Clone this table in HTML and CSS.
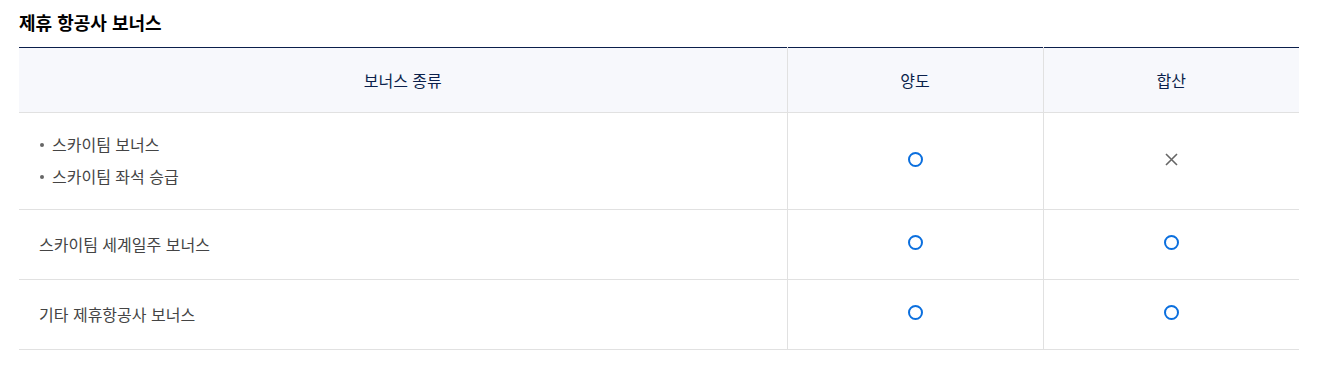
FILE: index.html
```html
<!DOCTYPE html>
<html lang="ko">
<head>
<meta charset="utf-8">
<link rel="stylesheet" href="styles.css">
</head>
<body>
<section class="bonus">
  <h3 class="bonus-title">제휴 항공사 보너스</h3>
  <table class="bonus-table">
    <colgroup>
      <col class="col-kind">
      <col class="col-mark">
      <col class="col-mark">
    </colgroup>
    <thead>
      <tr>
        <th>보너스 종류</th>
        <th>양도</th>
        <th>합산</th>
      </tr>
    </thead>
    <tbody>
      <tr class="row-tall">
        <td class="kind">
          <ul class="dot-list">
            <li>스카이팀 보너스</li>
            <li>스카이팀 좌석 승급</li>
          </ul>
        </td>
        <td class="mark"><span class="icon-o"></span></td>
        <td class="mark"><svg class="icon-x" width="13" height="13" viewBox="0 0 13 13"><path d="M1 1 L12 12 M12 1 L1 12" stroke="#666" stroke-width="1.6" fill="none"/></svg></td>
      </tr>
      <tr>
        <td class="kind">스카이팀 세계일주 보너스</td>
        <td class="mark"><span class="icon-o"></span></td>
        <td class="mark"><span class="icon-o"></span></td>
      </tr>
      <tr>
        <td class="kind">기타 제휴항공사 보너스</td>
        <td class="mark"><span class="icon-o"></span></td>
        <td class="mark"><span class="icon-o"></span></td>
      </tr>
    </tbody>
  </table>
</section>
</body>
</html>
```
FILE: styles.css
```css
* { box-sizing: border-box; }
html, body { margin: 0; padding: 0; background: #fff; }
body {
  font-family: "Noto Sans CJK KR", "Noto Sans", sans-serif;
  color: #444;
}
.bonus { padding: 10px 22px 0 19px; }
.bonus-title {
  margin: 0;
  height: 37px;
  font-size: 18px;
  line-height: 24px;
  font-weight: 700;
  color: #000;
}
.bonus-table {
  width: 100%;
  border-collapse: collapse;
  table-layout: fixed;
  border-top: 1px solid #0b1f4b;
}
.col-kind { width: 60%; }
.col-mark { width: 20%; }
.bonus-table th {
  height: 65px;
  background: #f7f8fc;
  font-size: 16px;
  font-weight: 400;
  color: #0b1f4b;
  text-align: center;
  border-bottom: 1px solid #e1e1e1;
  border-left: 1px solid #e1e1e1;
  padding: 0;
}
.bonus-table th:first-child, .bonus-table td:first-child { border-left: none; }
.bonus-table td {
  height: 70px;
  font-size: 16px;
  border-bottom: 1px solid #e1e1e1;
  border-left: 1px solid #e1e1e1;
  padding: 0;
  vertical-align: middle;
}
.bonus-table .row-tall td { height: 97px; }
.bonus-table td.kind { padding: 0 0 2px 20px; color: #444; }
.bonus-table td.mark { text-align: center; padding-bottom: 4px; }
.dot-list { list-style: none; margin: 0; padding: 0; }
.dot-list li {
  position: relative;
  padding-left: 13px;
  line-height: 32px;
}
.dot-list li::before {
  content: "";
  position: absolute;
  left: 1px;
  top: 15px;
  width: 4px;
  height: 4px;
  border-radius: 50%;
  background: #666;
}
.icon-o {
  display: block;
  margin: 0 auto;
  width: 15px;
  height: 15px;
  border: 2px solid #0b6fde;
  border-radius: 50%;
}
.icon-x { display: block; margin: 0 auto; }
```
